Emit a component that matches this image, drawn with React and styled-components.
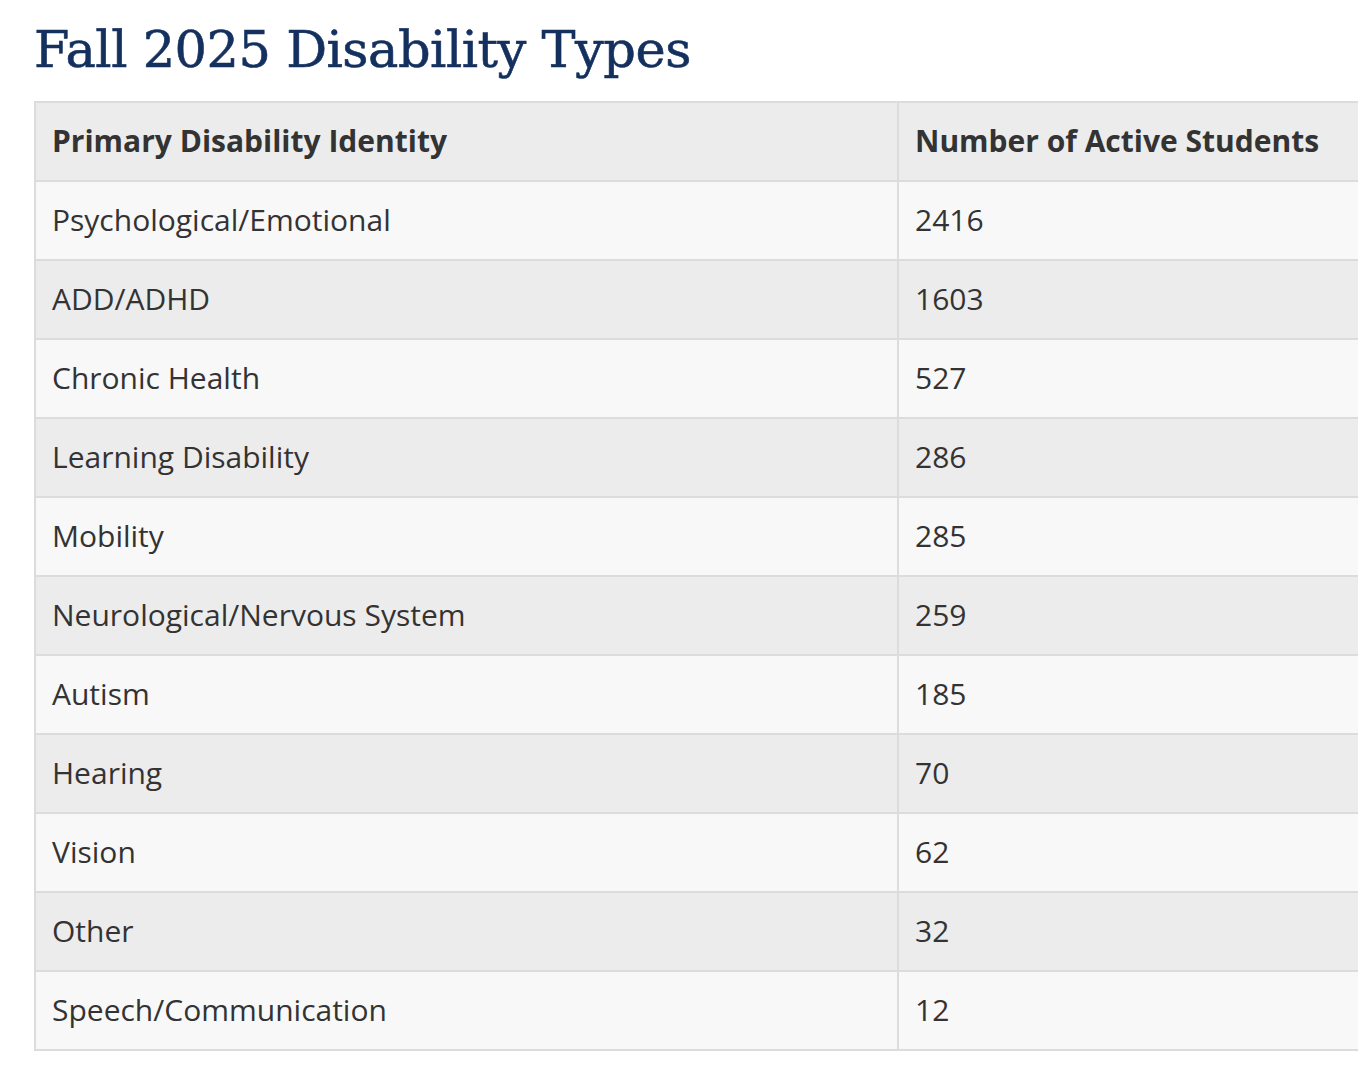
import styled, { createGlobalStyle } from 'styled-components';

const rows = [
  ['Psychological/Emotional', 2416],
  ['ADD/ADHD', 1603],
  ['Chronic Health', 527],
  ['Learning Disability', 286],
  ['Mobility', 285],
  ['Neurological/Nervous System', 259],
  ['Autism', 185],
  ['Hearing', 70],
  ['Vision', 62],
  ['Other', 32],
  ['Speech/Communication', 12],
];

const GlobalStyle = createGlobalStyle`
  body {
    margin: 0;
    background: #fff;
    font-family: 'Open Sans', 'Noto Sans', sans-serif;
  }
`;

const Page = styled.main`
  padding: 17px 0 0 34px;
  overflow: hidden;
`;

const Title = styled.h2`
  margin: 0 0 18px;
  font-family: 'DejaVu Serif', 'Liberation Serif', serif;
  font-size: 51px;
  font-weight: 400;
  line-height: 1.3;
  color: #14305e;
  letter-spacing: -0.5px;
  -webkit-text-stroke: 0.6px #14305e;
`;

const Table = styled.table`
  border-collapse: collapse;
  width: 1420px;
  color: #333;
  font-size: 30px;
`;

const Row = styled.tr`
  background: ${(props) => (props.shade ? '#ececec' : '#f8f8f8')};
`;

const HeadCell = styled.th`
  text-align: left;
  font-weight: 700;
  padding: 17px 16px 18px;
  line-height: 42px;
  border: 2px solid #dcdcdc;
  width: ${(props) => props.w || 'auto'};
`;

const Cell = styled.td`
  padding: 17px 16px 18px;
  line-height: 42px;
  border: 2px solid #dcdcdc;
`;

const App = () => (
  <Page>
    <GlobalStyle />
    <Title>Fall 2025 Disability Types</Title>
    <Table>
      <thead>
        <Row shade>
          <HeadCell w='829px'>Primary Disability Identity</HeadCell>
          <HeadCell>Number of Active Students</HeadCell>
        </Row>
      </thead>
      <tbody>
        {rows.map(([label, count], i) => (
          <Row key={label} shade={i % 2 === 1}>
            <Cell>{label}</Cell>
            <Cell>{count}</Cell>
          </Row>
        ))}
      </tbody>
    </Table>
  </Page>
);

export default App;
